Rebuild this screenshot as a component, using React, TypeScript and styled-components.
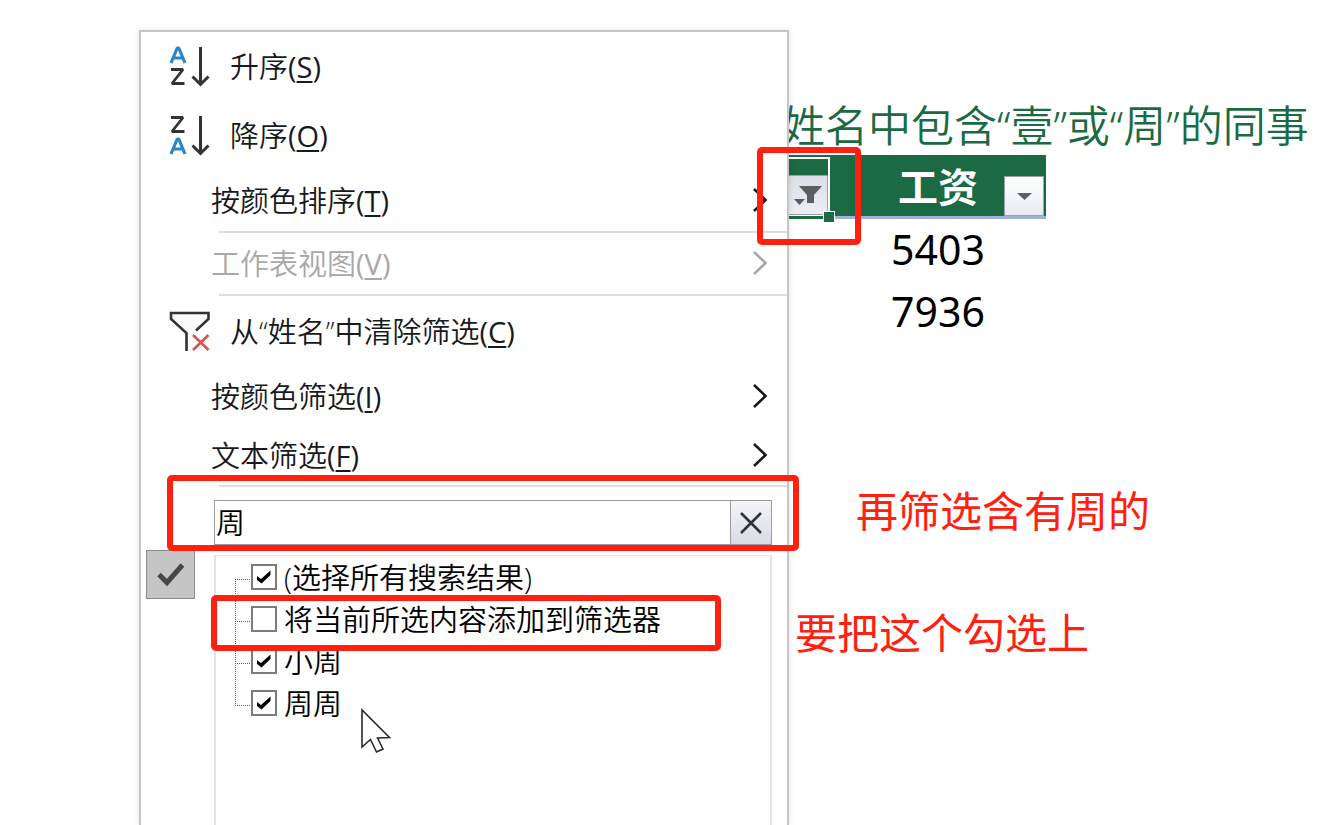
import React from "react";
import styled, { createGlobalStyle, css } from "styled-components";

const RED = "#ff2010";
const GREEN = "#1b6a44";

const GlobalStyle = createGlobalStyle`
  *, *::before, *::after { box-sizing: border-box; }
  body {
    margin: 0;
    background: #fff;
    color: #181820;
    font-family: "Noto Sans", "Noto Sans CJK SC", sans-serif;
    font-weight: 400;
  }
  button, input { font: inherit; color: inherit; }
`;

const Page = styled.main`
  display: flex;
  height: 100vh;
  overflow: hidden;
  padding-left: 139px;
`;

const Menu = styled.section`
  position: relative;
  z-index: 1;
  flex: 0 0 650px;
  display: flex;
  flex-direction: column;
  margin-top: 30px;
  background: #fff;
  border: 2px solid #c6c6c6;
  border-bottom: 0;
  box-shadow: 0 0 6px rgba(0, 0, 0, 0.12);
  font-family: "Open Sans", "Noto Sans CJK SC", sans-serif;
  font-weight: 350;
`;

const MenuItem = styled.button<{ $height: number; $indent?: boolean }>`
  display: flex;
  align-items: center;
  flex: none;
  height: ${(p) => p.$height}px;
  padding: 0 19px 0 ${(p) => (p.$indent ? 70 : 28)}px;
  border: 0;
  background: none;
  font-size: 29px;
  line-height: 40px;
  text-align: left;
  white-space: nowrap;
  &:disabled { color: #a8a8a8; }
`;

const ItemIcon = styled.svg`
  flex: none;
  width: 42px;
  height: 42px;
  margin-right: 19px;
`;

const ItemLabel = styled.span`
  flex: 1;
`;

const Hotkey = styled.span`
  font-weight: 400;
`;

const Key = styled.span`
  text-decoration: underline;
  text-decoration-thickness: 2px;
  text-underline-offset: 3px;
`;

const Separator = styled.hr`
  flex: none;
  width: auto;
  height: 2px;
  margin: 0 0 0 78px;
  border: 0;
  background: #dedede;
`;

const Frame = styled.span`
  position: absolute;
  z-index: 2;
  border: 6px solid ${RED};
  border-radius: 5px;
  pointer-events: none;
`;

const SearchForm = styled.form`
  position: relative;
  flex: none;
  display: flex;
  height: 45px;
  margin: 13px 15px 0 73px;
  border: 1px solid #9b9b9f;
`;

const SearchInput = styled.input`
  flex: 1;
  min-width: 0;
  padding: 0 1px 4px;
  border: 0;
  outline: 0;
  color: #000;
  font-size: 29px;
`;

const ClearButton = styled.button`
  display: grid;
  place-items: center;
  width: 41px;
  padding: 0;
  border: 0;
  border-left: 1px solid #9b9b9f;
  background: linear-gradient(#f4f5f9, #d9dce6);
`;

const SearchFrame = styled(Frame)`
  top: -26px;
  right: -28px;
  bottom: -7px;
  left: -48px;
`;

const Results = styled.div`
  flex: 1;
  display: grid;
  grid-template-columns: 73px 1fr;
  padding-right: 15px;
`;

const CheckTile = styled.span`
  display: grid;
  place-items: center;
  width: 49px;
  height: 49px;
  margin: 5px 0 0 5px;
  border: 1px solid #8a8a8a;
  background: #c5c5c5;
`;

const ResultPanel = styled.div`
  position: relative;
  margin-top: 10px;
  border: 2px solid #e4e4e4;
  border-width: 1px 2px 0;
`;

const Tree = styled.ul`
  margin: 0;
  padding: 0;
  list-style: none;
  color: #000;
`;

const TreeRow = styled.li<{ $first: boolean }>`
  position: relative;
  display: flex;
  align-items: center;
  height: 42px;
  padding-left: 35px;
  &::before {
    content: "";
    position: absolute;
    left: 19px;
    width: 15px;
    bottom: 18px;
    height: ${(p) => (p.$first ? 1 : 43)}px;
    border: 1px dotted #606060;
    border-width: 0 0 1px 1px;
  }
`;

const Choice = styled.label`
  display: flex;
  align-items: center;
  font-size: 29px;
  line-height: 42px;
  white-space: nowrap;
`;

const ChoiceText = styled.span`
  padding-top: 2px;
`;

const BoxWrap = styled.span`
  display: grid;
  place-items: center;
  margin-right: 7px;
  > * { grid-area: 1 / 1; }
`;

const CheckBox = styled.input`
  appearance: none;
  width: 26px;
  height: 26px;
  margin: 0;
  border: 2px solid #7c7c7c;
  background: #fff;
  & + svg { visibility: hidden; pointer-events: none; }
  &:checked + svg { visibility: visible; }
`;

const ChoiceFrame = styled(Frame)`
  top: -3px;
  left: -5px;
  width: 510px;
  height: 56px;
`;

const Pointer = styled.svg`
  position: absolute;
  top: 152px;
  left: 144px;
`;

const Sheet = styled.section`
  flex: 1;
  min-width: 0;
  margin-left: -7px;
  padding-top: 97px;
`;

const Title = styled.h1`
  margin: 0;
  color: ${GREEN};
  font-size: 43px;
  font-weight: 350;
  line-height: 58px;
  white-space: nowrap;
`;

const Table = styled.table`
  border-collapse: collapse;
  table-layout: fixed;
  width: 264px;
  color: #000;
  font-size: 41px;
  line-height: 58px;
`;

const HeadCell = styled.th<{ $selected?: boolean }>`
  position: relative;
  width: ${(p) => (p.$selected ? 48 : 216)}px;
  height: 64px;
  padding: 0;
  background: ${GREEN};
  color: #fff;
  font-size: 40px;
  font-weight: 700;
  line-height: 62px;
  ${(p) =>
    p.$selected
      ? css`
          box-shadow: inset 0 2px ${GREEN}, inset 0 -3px ${GREEN}, inset -2px 4px #fff, inset 0 -5px #fff;
        `
      : css`
          box-shadow: inset 0 -3px #9fb3d8;
        `}
`;

const Cell = styled.td`
  height: 62px;
  padding: 0 0 2px;
  text-align: center;
`;

const FilterButton = styled.button<{ $active?: boolean }>`
  position: absolute;
  right: 2px;
  bottom: ${(p) => (p.$active ? 4 : 3)}px;
  display: block;
  width: 40px;
  height: 40px;
  padding: 0;
  border: 1px solid #9a9fab;
  background: ${(p) => (p.$active ? "linear-gradient(#dcdfe8, #eceef3)" : "linear-gradient(#fff, #e9ebf1)")};
  svg { display: block; }
`;

const FillHandle = styled.span`
  position: absolute;
  z-index: 1;
  right: -5px;
  bottom: -4px;
  width: 12px;
  height: 12px;
  border: 1px solid #fff;
  background: ${GREEN};
`;

const FilterFrame = styled(Frame)`
  top: -8px;
  left: -25px;
  width: 104px;
  height: 98px;
`;

const Notes = styled.div`
  display: grid;
  gap: 66px;
  margin-top: 140px;
  color: ${RED};
`;

const Note = styled.p<{ $indent: number }>`
  margin: 0;
  padding-left: ${(p) => p.$indent}px;
  font-size: 42px;
  line-height: 56px;
  white-space: nowrap;
`;

const LetterA = ({ y }: { y: number }) => (
  <path
    d={`M2 ${y + 17} L8.200 ${y + 2} H9.800 L16 ${y + 17} M4.500 ${y + 12} H13.500`}
    fill="none"
    stroke="#2b86c8"
    strokeWidth="3.200"
    strokeLinejoin="bevel"
  />
);

const LetterZ = ({ y }: { y: number }) => (
  <path
    d={`M2 ${y + 1.5} H14 L3 ${y + 15.5} H15.500`}
    fill="none"
    stroke="#333"
    strokeWidth="2.800"
    strokeLinejoin="bevel"
  />
);

const SortIcon = ({ descending }: { descending?: boolean }) => (
  <ItemIcon viewBox="0 0 42 42" aria-hidden="true">
    {descending ? <LetterZ y={1} /> : <LetterA y={0} />}
    {descending ? <LetterA y={22} /> : <LetterZ y={22} />}
    <path d="M31.500 1 V39 M23.500 30.500 L31.500 38.500 L39.500 30.500" fill="none" stroke="#333" strokeWidth="3" />
  </ItemIcon>
);

const ClearFilterIcon = () => (
  <ItemIcon viewBox="0 0 42 42" aria-hidden="true">
    <path d="M17.500 40 V22 L2 8 V2 H39.500 V8 L27 19.500" fill="#fafafa" stroke="#333" strokeWidth="2.600" />
    <path d="M24 24 L39.500 39 M39.500 24 L24 39" fill="none" stroke="#d9534f" strokeWidth="2.600" />
  </ItemIcon>
);

const Chevron = () => (
  <svg width="16" height="28" viewBox="0 0 16 28" aria-hidden="true">
    <path d="M2 2 L13.500 13 L2 24" fill="none" stroke="currentColor" strokeWidth="2.600" />
  </svg>
);

const Tick = () => (
  <svg width="26" height="26" viewBox="0 0 26 26" aria-hidden="true">
    <path d="M6 12 L10 15 L19.500 6.500 V11 L10.500 19.500 L6 16 Z" fill="#000" />
  </svg>
);

type Action = {
  label: string;
  hotkey: string;
  height: number;
  icon?: React.ReactNode;
  disabled?: boolean;
  divided?: boolean;
};

const actions: Action[] = [
  { label: "升序", hotkey: "S", height: 69, icon: <SortIcon /> },
  { label: "降序", hotkey: "O", height: 69, icon: <SortIcon descending /> },
  { label: "按颜色排序", hotkey: "T", height: 61, divided: true },
  { label: "工作表视图", hotkey: "V", height: 61, disabled: true, divided: true },
  { label: "从“姓名”中清除筛选", hotkey: "C", height: 71, icon: <ClearFilterIcon /> },
  { label: "按颜色筛选", hotkey: "I", height: 59 },
  { label: "文本筛选", hotkey: "F", height: 59, divided: true },
];

const choices = [
  { label: "(选择所有搜索结果)", checked: true },
  { label: "将当前所选内容添加到筛选器", checked: false, framed: true },
  { label: "小周", checked: true },
  { label: "周周", checked: true },
];

export default function App() {
  return (
    <>
      <GlobalStyle />
      <Page>
        <Menu aria-label="筛选">
          {actions.map((a) => (
            <React.Fragment key={a.label}>
              <MenuItem type="button" $height={a.height} $indent={!a.icon} disabled={a.disabled}>
                {a.icon}
                <ItemLabel>
                  {a.label}
                  <Hotkey>
                    (<Key>{a.hotkey}</Key>)
                  </Hotkey>
                </ItemLabel>
                {!a.icon && <Chevron />}
              </MenuItem>
              {a.divided && <Separator />}
            </React.Fragment>
          ))}
          <SearchForm onSubmit={(e) => e.preventDefault()}>
            <SearchInput aria-label="搜索" defaultValue="周" />
            <ClearButton type="reset" aria-label="清除">
              <svg width="24" height="24" viewBox="0 0 24 24" aria-hidden="true">
                <path d="M2 2 L22 22 M22 2 L2 22" stroke="#333" strokeWidth="2.600" />
              </svg>
            </ClearButton>
            <SearchFrame />
          </SearchForm>
          <Results>
            <CheckTile>
              <svg width="28" height="26" viewBox="0 0 28 26" aria-hidden="true">
                <path d="M2 12.500 L10 20.500 L25.500 3" fill="none" stroke="#484848" strokeWidth="5" />
              </svg>
            </CheckTile>
            <ResultPanel>
              <Tree>
                {choices.map((c, i) => (
                  <TreeRow key={c.label} $first={i === 0}>
                    <Choice>
                      <BoxWrap>
                        <CheckBox type="checkbox" defaultChecked={c.checked} />
                        <Tick />
                      </BoxWrap>
                      <ChoiceText>{c.label}</ChoiceText>
                    </Choice>
                    {c.framed && <ChoiceFrame />}
                  </TreeRow>
                ))}
              </Tree>
              <Pointer width="32" height="46" viewBox="0 0 32 46" aria-hidden="true">
                <path
                  d="M2 2 V39 L10.500 31.500 L16.500 44 L23 41 L17.500 30 L29.500 29.500 Z"
                  fill="#fff"
                  stroke="#2a2a2a"
                  strokeWidth="1.600"
                />
              </Pointer>
            </ResultPanel>
          </Results>
        </Menu>

        <Sheet>
          <Title>姓名中包含“壹”或“周”的同事</Title>
          <Table>
            <thead>
              <tr>
                <HeadCell $selected>
                  <FilterButton $active type="button" aria-label="姓名筛选">
                    <svg width="38" height="38" viewBox="0 0 38 38" aria-hidden="true">
                      <path d="M10 10 H33 L25 19 V27 H18 V19 Z" fill="#5c5d62" />
                      <path d="M5 23 H16 L10.500 29 Z" fill="#5c5d62" />
                    </svg>
                  </FilterButton>
                  <FillHandle />
                  <FilterFrame />
                </HeadCell>
                <HeadCell>
                  工资
                  <FilterButton type="button" aria-label="工资筛选">
                    <svg width="38" height="38" viewBox="0 0 38 38" aria-hidden="true">
                      <path d="M12 16 H27 L19.500 23 Z" fill="#5c5d62" />
                    </svg>
                  </FilterButton>
                </HeadCell>
              </tr>
            </thead>
            <tbody>
              <tr>
                <Cell />
                <Cell>5403</Cell>
              </tr>
              <tr>
                <Cell />
                <Cell>7936</Cell>
              </tr>
            </tbody>
          </Table>
          <Notes>
            <Note $indent={74}>再筛选含有周的</Note>
            <Note $indent={13}>要把这个勾选上</Note>
          </Notes>
        </Sheet>
      </Page>
    </>
  );
}
